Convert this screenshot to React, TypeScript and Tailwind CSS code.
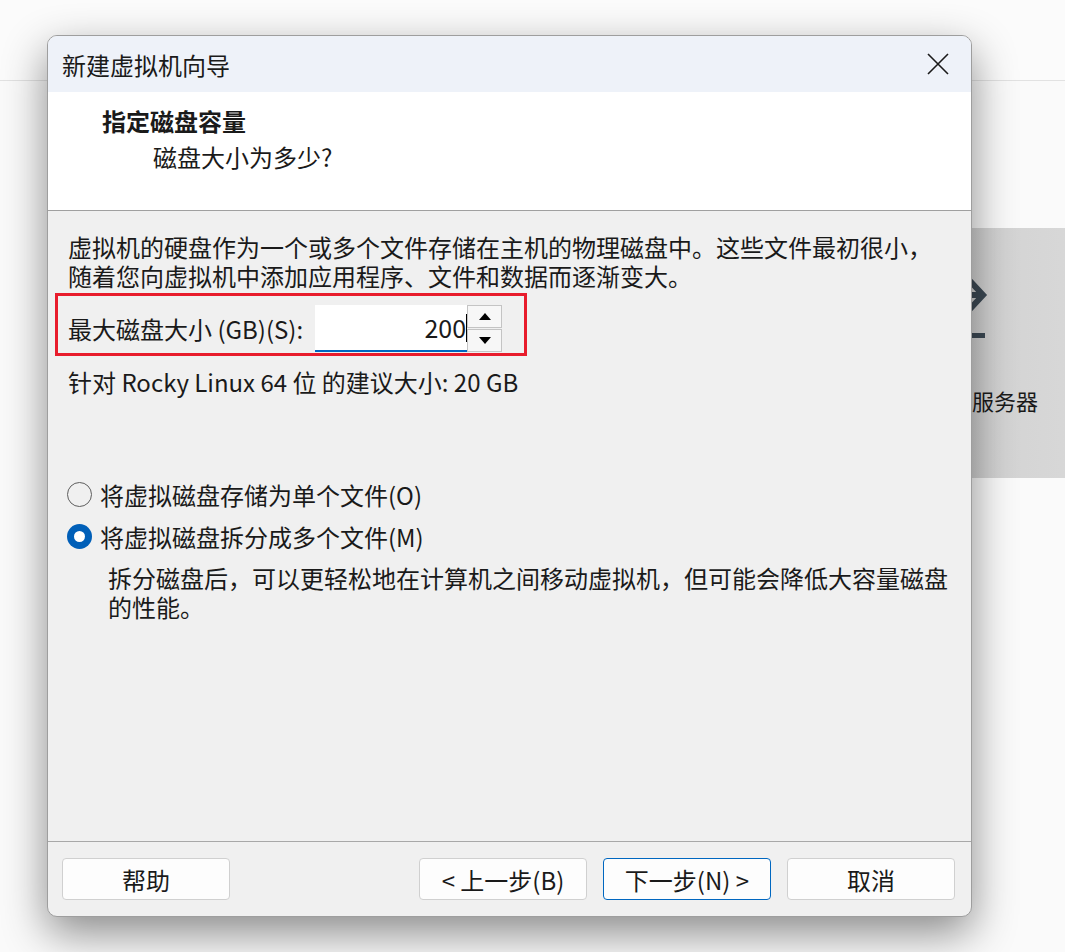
import React, { useState } from 'react';

const font = { fontFamily: '"Noto Sans CJK SC", "Liberation Sans", sans-serif' };

const Radio = ({ checked, label, onClick }: { checked: boolean; label: string; onClick: () => void }) => (
  <button onClick={onClick} className="flex items-center h-[29px] text-left">
    {checked ? (
      <span className="w-[25px] h-[25px] rounded-full bg-[#005fb8] flex items-center justify-center">
        <span className="w-[11px] h-[11px] rounded-full bg-white" />
      </span>
    ) : (
      <span className="w-[25px] h-[25px] rounded-full border-[1.5px] border-[#5e5e5e]" />
    )}
    <span className="ml-[8px]">{label}</span>
  </button>
);

const WizardButton = ({ label, primary }: { label: string; primary?: boolean }) => (
  <button
    className={
      primary
        ? 'w-[168px] h-[42px] rounded-[4px] bg-[#fdfdfd] border border-[#0067c0] text-[#1a1a1a]'
        : 'w-[168px] h-[42px] rounded-[4px] bg-[#fdfdfd] border border-[#d0d0d0] text-[#1a1a1a]'
    }
  >
    {label}
  </button>
);

export default function App() {
  const [size, setSize] = useState(200);
  const [split, setSplit] = useState(true);

  return (
    <div className="relative w-[1065px] h-[952px] overflow-hidden bg-[#fafafa] text-[#1a1a1a]" style={font}>
      {/* page behind the dialog */}
      <div className="h-[81px] border-b border-[#e2e2e2] bg-[#fbfbfb]" />
      <div className="absolute left-[780px] top-[228px] w-[300px] h-[250px] bg-[linear-gradient(to_right,#c8c8c8,#d8d8d8)] flex flex-col items-start pt-[50px]">
        <svg width="60" height="64" viewBox="0 0 60 64" className="ml-[160px] text-[#3d4a55]">
          <path d="M18 17h22M30 3l13 14-13 14" fill="none" stroke="currentColor" strokeWidth="6" />
          <rect x="12" y="55" width="33" height="5" fill="currentColor" />
        </svg>
        <div className="mt-[44px] ml-[104px] text-[22px] leading-[29px] whitespace-nowrap">连接远程服务器</div>
      </div>

      {/* dialog */}
      <div className="absolute left-[47px] top-[35px] w-[925px] h-[882px] rounded-[10px] border border-[#9e9e9e] overflow-hidden flex flex-col bg-[#f0f0f0] shadow-[0_16px_44px_rgba(0,0,0,0.45)] text-[24px] leading-[29px]">
        <div className="h-[56px] shrink-0 bg-[#eef2f9] flex items-center justify-between pl-[14px] pr-[22px]">
          <span>新建虚拟机向导</span>
          <svg width="22" height="22" viewBox="0 0 22 22">
            <path d="M1 1l20 20M21 1L1 21" stroke="#1a1a1a" strokeWidth="1.6" />
          </svg>
        </div>

        <div className="h-[119px] shrink-0 bg-white border-b border-[#a0a0a0] pt-[14px]">
          <div className="pl-[54px] font-bold">指定磁盘容量</div>
          <div className="pl-[105px] mt-[7px]">磁盘大小为多少?</div>
        </div>

        <div className="flex-1 pl-[20px] pr-[20px] pt-[21px]">
          <p>
            虚拟机的硬盘作为一个或多个文件存储在主机的物理磁盘中。这些文件最初很小，
            <br />
            随着您向虚拟机中添加应用程序、文件和数据而逐渐变大。
          </p>

          <div className="mt-[3px] -ml-[13px] w-[472px] h-[63px] border-[3px] border-[#e81c2c] flex items-start pt-[9px] pl-[10px]">
            <div className="h-[47px] flex items-center">最大磁盘大小 (GB)(S):</div>
            <div className="ml-[12px] w-[152px] h-[47px] bg-white border-b-2 border-[#0067c0] flex items-center justify-end text-[25px]">
              <span>{size}</span>
              <span className="w-[1px] h-[28px] bg-black" />
            </div>
            <div className="w-[35px] h-[47px] flex flex-col">
              <button onClick={() => setSize(size + 1)} className="h-[23px] mb-[1px] bg-[#f7f7f7] border border-[#c4c4c4] flex items-center justify-center">
                <span className="w-0 h-0 border-l-[6px] border-r-[6px] border-b-[7px] border-l-transparent border-r-transparent border-b-black" />
              </button>
              <button onClick={() => setSize(Math.max(1, size - 1))} className="h-[23px] bg-[#f7f7f7] border border-[#c4c4c4] flex items-center justify-center">
                <span className="w-0 h-0 border-l-[6px] border-r-[6px] border-t-[7px] border-l-transparent border-r-transparent border-t-black" />
              </button>
            </div>
          </div>

          <p className="mt-[11px]">针对 Rocky Linux 64 位 的建议大小: 20 GB</p>

          <div className="mt-[84px] -ml-[1px] flex flex-col gap-[13px] items-start">
            <Radio checked={!split} label="将虚拟磁盘存储为单个文件(O)" onClick={() => setSplit(false)} />
            <Radio checked={split} label="将虚拟磁盘拆分成多个文件(M)" onClick={() => setSplit(true)} />
          </div>
          <p className="mt-[12px] pl-[40px]">
            拆分磁盘后，可以更轻松地在计算机之间移动虚拟机，但可能会降低大容量磁盘
            <br />
            的性能。
          </p>
        </div>

        <div className="h-[75px] shrink-0 border-t border-[#a8a8a8] flex items-start pt-[16px] pl-[14px] pr-[16px]">
          <WizardButton label="帮助" />
          <div className="flex-1" />
          <div className="flex gap-[16px]">
            <WizardButton label="< 上一步(B)" />
            <WizardButton label="下一步(N) >" primary />
            <WizardButton label="取消" />
          </div>
        </div>
      </div>
    </div>
  );
}
